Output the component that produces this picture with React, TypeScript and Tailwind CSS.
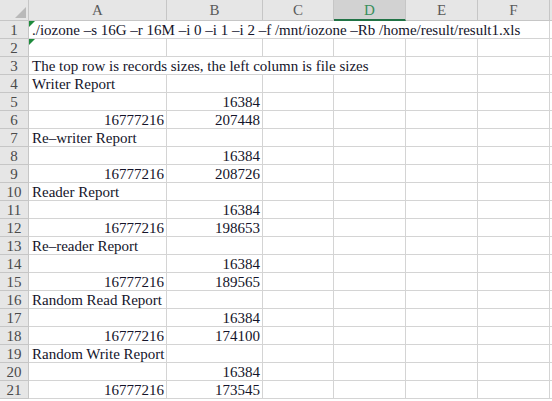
import React from "react";

const cols = [
  { l: "A", w: 138 },
  { l: "B", w: 96 },
  { l: "C", w: 71 },
  { l: "D", w: 72 },
  { l: "E", w: 72 },
  { l: "F", w: 72 },
];

type Row = { a?: string; b?: string; span?: number; right?: boolean };

const rows: Row[] = [
  { a: "./iozone –s 16G –r 16M –i 0 –i 1 –i 2 –f /mnt/iozone –Rb /home/result/result1.xls", span: 6 },
  {},
  { a: "The top row is records sizes, the left column is file sizes", span: 4 },
  { a: "Writer Report" },
  { b: "16384" },
  { a: "16777216", b: "207448", right: true },
  { a: "Re–writer Report" },
  { b: "16384" },
  { a: "16777216", b: "208726", right: true },
  { a: "Reader Report" },
  { b: "16384" },
  { a: "16777216", b: "198653", right: true },
  { a: "Re–reader Report" },
  { b: "16384" },
  { a: "16777216", b: "189565", right: true },
  { a: "Random Read Report" },
  { b: "16384" },
  { a: "16777216", b: "174100", right: true },
  { a: "Random Write Report" },
  { b: "16384" },
  { a: "16777216", b: "173545", right: true },
];

export default function App() {
  return (
    <div className="w-[552px] h-[401px] overflow-hidden bg-white text-[15px] leading-none font-['Liberation_Serif']">
      {/* header */}
      <div className="flex h-[21px]">
        <div className="relative w-[29px] shrink-0 bg-[#e6e6e6] border-r border-b border-[#c6c6c6]">
          <svg className="absolute right-[2px] bottom-[2px]" width="11" height="11" viewBox="0 0 11 11">
            <polygon points="11,0 11,11 0,11" fill="#b9b9b9" />
          </svg>
        </div>
        {cols.map((c) =>
          c.l === "D" ? (
            <div
              key={c.l}
              className="shrink-0 flex items-center justify-center bg-[#d2d2d2] border-r border-[#c6c6c6] border-b-2 border-b-[#217346] text-[#3a8f5c]"
              style={{ width: c.w }}
            >
              <span className="pt-[2px]">{c.l}</span>
            </div>
          ) : (
            <div
              key={c.l}
              className="shrink-0 flex items-center justify-center bg-[#e6e6e6] border-r border-b border-[#c6c6c6] text-[#5a5a5a]"
              style={{ width: c.w }}
            >
              <span className="pt-[1px]">{c.l}</span>
            </div>
          )
        )}
        <div className="flex-1 bg-[#e6e6e6] border-b border-[#c6c6c6]" />
      </div>
      {rows.map((r, i) => {
        const span = r.span ?? 1;
        const spanW = cols.slice(0, span).reduce((s, c) => s + c.w, 0);
        return (
          <div key={i} className="flex h-[18px]">
            <div className="w-[29px] shrink-0 flex items-center justify-center bg-[#e6e6e6] border-r border-b border-[#c6c6c6] text-[#4a4a4a]">
              <span className="pt-[1px]">{i + 1}</span>
            </div>
            <div
              className={`relative shrink-0 flex items-center border-r border-b border-[#d4d4d4] text-[#14142a] whitespace-nowrap ${
                r.right ? "justify-end pr-[2px]" : "pl-[3px]"
              }`}
              style={{ width: spanW }}
            >
              {(i === 0 || i === 1) && (
                <svg className="absolute left-0 top-0" width="6" height="6" viewBox="0 0 6 6">
                  <polygon points="0,0 6,0 0,6" fill="#1e8a3c" />
                </svg>
              )}
              <span className="pt-[1px]">{r.a}</span>
            </div>
            {span === 1 && (
              <div
                className="shrink-0 flex items-center justify-end pr-[2px] border-r border-b border-[#d4d4d4] text-[#14142a]"
                style={{ width: cols[1].w }}
              >
                <span className="pt-[1px]">{r.b}</span>
              </div>
            )}
            {cols.slice(Math.max(span, 2)).map((c) => (
              <div
                key={c.l}
                className="shrink-0 border-r border-b border-[#d4d4d4]"
                style={{ width: c.w }}
              />
            ))}
            <div className="flex-1 border-b border-[#d4d4d4]" />
          </div>
        );
      })}
    </div>
  );
}
